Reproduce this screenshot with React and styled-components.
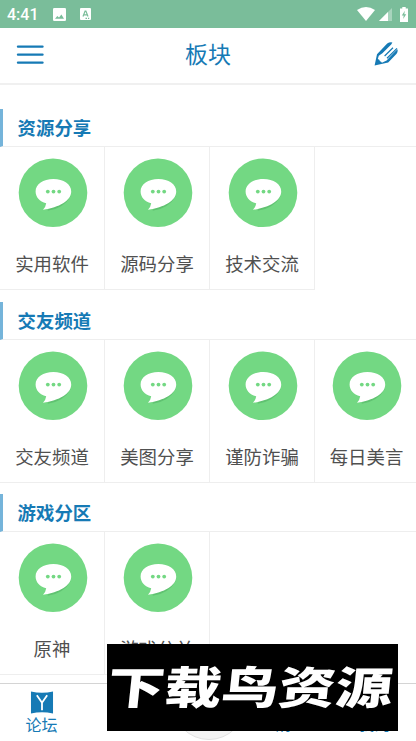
import React from "react"
import styled, { createGlobalStyle } from "styled-components";

const color_primary = "#167ab5";
const color_status = "#7abd9a";
const color_line = "#eeeeee";
const color_green = "#73d883";

const GlobalStyle = createGlobalStyle`
    *{
        box-sizing: border-box;
    }
    body{
        margin: 0;
        overflow: hidden;
        background-color: #ffffff;
        font-family: "Noto Sans CJK SC", sans-serif;
    }
`

const Screen = styled.div`
    position: relative;
    display: flex;
    flex-direction: column;
    width: 416px;
    height: 741px;
    overflow: hidden;
    background-color: #ffffff;
`

const StatusBar = styled.div`
    display: flex;
    flex: none;
    align-items: center;
    justify-content: space-between;
    height: 28px;
    padding: 0 8px 0 7px;
    background-color: ${color_status};
    color: #ffffff;

    svg{
        display: block;
    }
`

const StatusGroup = styled.div`
    display: flex;
    align-items: center;
    gap: ${({ $gap }) => $gap}px;
`

const Clock = styled.span`
    width: 32px;
    padding-top: 2px;
    font-family: Roboto, sans-serif;
    font-size: 16px;
    font-weight: 500;
    line-height: 26px;
`

const Header = styled.header`
    display: flex;
    flex: none;
    align-items: center;
    justify-content: space-between;
    height: 57px;
    padding: 0 17px 3px 16px;
    border-bottom: 2px solid #f0f0f0;
`

const Title = styled.h1`
    margin: 0;
    color: ${color_primary};
    font-size: 23px;
    font-weight: 400;
    line-height: 34px;
    padding: 0 2px 2px 0;
`

const Content = styled.main`
    flex: 1;
    min-height: 0;
    padding-top: 24px;
    overflow: hidden;
`

const Section = styled.section`
    height: 180.7px;
    margin-bottom: 12px;
`

const SectionTitle = styled.h2`
    height: 38px;
    margin: 0;
    padding-left: 14.6px;
    border-left: 3.5px solid #75b4da;
    border-bottom: 1px solid ${color_line};
    color: ${color_primary};
    font-size: 18.4px;
    font-weight: 700;
    line-height: 37.4px;
`

const Grid = styled.div`
    display: grid;
    grid-template-columns: repeat(3, 105px) 104px;
`

const Cell = styled.div`
    display: flex;
    flex-direction: column;
    align-items: center;
    height: 143px;
    padding-top: 11px;
    border-right: 1px solid ${color_line};
    border-bottom: 1px solid ${color_line};

    svg{
        display: block;
        margin-left: 1px;
    }
`

const Label = styled.span`
    margin-top: 21px;
    color: #505050;
    font-size: 18.4px;
    line-height: 28px;
    white-space: nowrap;
`

const TabBar = styled.nav`
    position: relative;
    display: flex;
    flex: none;
    height: 58px;
    border-top: 1px solid #d4d4d4;
    background-color: #ffffff;
`

const Tab = styled.div`
    display: flex;
    flex: 1;
    flex-direction: column;
    align-items: center;
    padding-top: 7px;
    color: ${color_primary};
    font-size: 16px;
    line-height: 22px;

    svg{
        display: block;
        height: 23px;
        margin-bottom: -1px;
    }
`

const TabIcon = styled.div`
    height: 21px;
`

// Round button that rises above the tab bar
const PostButton = styled.div`
    position: absolute;
    top: -18px;
    left: 172px;
    width: 74px;
    height: 74px;
    border: 1px solid #e2e2e2;
    border-radius: 50%;
    background-color: #f4f4f4;
`

const Banner = styled.div`
    position: absolute;
    top: 644px;
    left: 107px;
    display: flex;
    align-items: center;
    justify-content: center;
    width: 291px;
    height: 87px;
    background-color: #000000;
`

const BannerText = styled.span`
    position: relative;
    top: -3px;
    left: -2px;
    color: #ffffff;
    font-size: 57px;
    font-weight: 900;
    line-height: 87px;
    white-space: nowrap;
    transform: skewX(-6deg) scaleY(0.78);
`

const ImageIcon = () => (
    <svg width="13" height="13" viewBox="0 0 13 13">
        <rect width="13" height="13" rx="1.3" fill="#fff" />
        <path d="M2 10.7L4.3 8L6 9.6L8.4 6.6L11 10.7Z" fill={color_status} />
    </svg>
)

const LetterIcon = () => (
    <svg width="11" height="12" viewBox="0 0 11 12">
        <rect width="11" height="12" rx="1" fill="#fff" />
        <path d="M3 8.5L5.1 3H5.9L8 8.5M3.8 6.8H7.2M5.5 10.3H7M8 10.3H9.2" fill="none" stroke={color_status} strokeWidth="1.2" />
    </svg>
)

const WifiIcon = () => (
    <svg width="18" height="14" viewBox="0 0 18 14">
        <path d="M0 3Q9 -3 18 3L9 14Z" fill="#fff" />
    </svg>
)

const SignalIcon = () => (
    <svg width="13" height="13" viewBox="0 0 13 13">
        <path d="M0 13L13 0V13Z" fill="#fff" opacity="0.35" />
        <path d="M0 13L9 4V13Z" fill="#fff" />
    </svg>
)

const BatteryIcon = () => (
    <svg width="8" height="15" viewBox="0 0 8 15">
        <path d="M2.3 0H5.7V1.4H8V15H0V1.4H2.3Z" fill="#fff" />
        <path d="M4.8 3.8L1.8 8.6H3.7L3.2 12L6.2 7.2H4.3Z" fill={color_status} />
    </svg>
)

const MenuIcon = () => (
    <svg width="28" height="21" viewBox="0 0 28 21">
        <path d="M2 2.6H26.5M2 10.6H26.5M2 18.6H26.5" stroke={color_primary} strokeWidth="2.4" strokeLinecap="round" />
    </svg>
)

const PencilIcon = () => (
    <svg width="25" height="25" viewBox="0 0 25 25">
        <path d="M0.6 23.6L3 12.2L13.2 1.5Q15.6 -0.2 18.4 0.4L17.2 2.6L8.4 11.2L4.8 13.8L3.8 17Q5.6 17.6 6 19.2Q7.4 19.6 7.9 20.8L12.6 18.6L19.6 11.1L23.4 7.2Q24.2 9.6 22.6 11.8L14.2 20.4Z" fill={color_primary} />
        <path d="M10.6 14L19 5.8M13 16.2L23 6.4" fill="none" stroke={color_primary} strokeWidth="1.2" />
    </svg>
)

const ChatIcon = () => (
    <svg width="70" height="70" viewBox="0 0 70 70">
        <circle cx="35" cy="34.8" r="34.3" fill={color_green} />
        <path d="M29.5 52.8Q46 50.5 52.6 38L48 40L31 50Z" fill="#60c271" />
        <path d="M35.4 20.9C45.6 20.9 53.2 26 53.2 33.4C53.2 42.7 41.2 49.2 25 51.8Q27.8 48.8 28.2 45.2C21.4 43.4 17.6 38.8 17.6 33.4C17.6 26 25.2 20.9 35.4 20.9Z" fill="#fff" />
        <circle cx="29.8" cy="33.6" r="1.9" fill={color_green} />
        <circle cx="35.5" cy="33.6" r="1.9" fill={color_green} />
        <circle cx="41.2" cy="33.6" r="1.9" fill={color_green} />
    </svg>
)

const ForumIcon = () => (
    <svg width="24" height="24" viewBox="0 0 24 24">
        <path d="M0.5 0.5Q12 3.2 23.5 0.5V23.5Q12 21 0.5 23.5Z" fill={color_primary} />
        <path d="M6.6 4.5L12 12.2L17.4 4.5M12 12V20" fill="none" stroke="#fff" strokeWidth="1.9" />
    </svg>
)

const sections = [
    { title: "资源分享", items: ["实用软件", "源码分享", "技术交流"] },
    { title: "交友频道", items: ["交友频道", "美图分享", "谨防诈骗", "每日美言"] },
    { title: "游戏分区", items: ["原神", "游戏分关"] },
]

const App = () => {
    return (
        <Screen>
            <GlobalStyle />
            <StatusBar>
                <StatusGroup $gap={14}>
                    <Clock>4:41</Clock>
                    <ImageIcon />
                    <LetterIcon />
                </StatusGroup>
                <StatusGroup $gap={4}>
                    <WifiIcon />
                    <SignalIcon />
                    <span />
                    <BatteryIcon />
                </StatusGroup>
            </StatusBar>
            <Header>
                <MenuIcon />
                <Title>板块</Title>
                <PencilIcon />
            </Header>
            <Content>
                {sections.map((section) => (
                    <Section key={section.title}>
                        <SectionTitle>{section.title}</SectionTitle>
                        <Grid>
                            {section.items.map((item) => (
                                <Cell key={item}>
                                    <ChatIcon />
                                    <Label>{item}</Label>
                                </Cell>
                            ))}
                        </Grid>
                    </Section>
                ))}
            </Content>
            <TabBar>
                <Tab>
                    <ForumIcon />
                    论坛
                </Tab>
                <Tab />
                <Tab />
                <Tab>
                    <TabIcon />
                    消息
                </Tab>
                <Tab>
                    <TabIcon />
                    我的
                </Tab>
                <PostButton />
            </TabBar>
            <Banner>
                <BannerText>下载鸟资源</BannerText>
            </Banner>
        </Screen>
    )
}

export default App;
